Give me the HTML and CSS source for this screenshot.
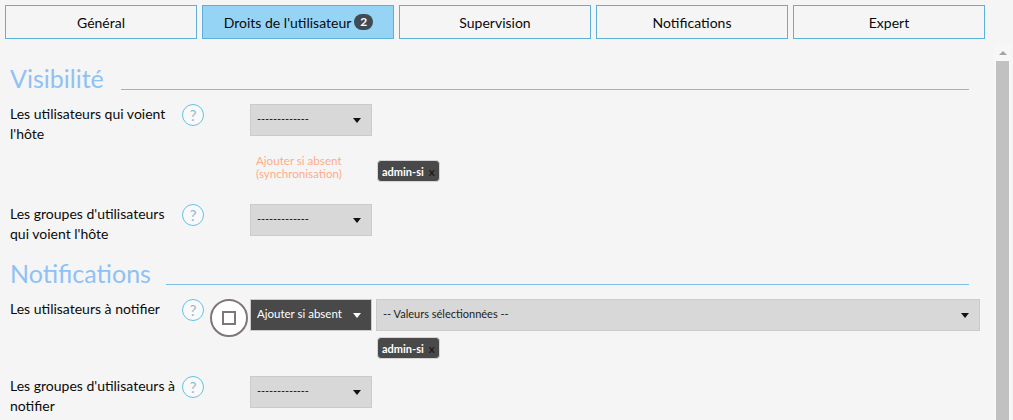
FILE: index.html
```html
<!DOCTYPE html>
<html lang="fr">
<head>
<meta charset="utf-8">
<title>Droits de l'utilisateur</title>
<link rel="stylesheet" href="styles.css">
</head>
<body>
<div class="page">
  <nav class="tabs">
    <a class="tab">Général</a>
    <a class="tab active"><span class="tab-text">Droits de l'utilisateur</span> <span class="badge">2</span></a>
    <a class="tab">Supervision</a>
    <a class="tab">Notifications</a>
    <a class="tab">Expert</a>
  </nav>
  <div class="body">
    <main class="content">
      <h2 class="section first"><span>Visibilité</span></h2>
      <div class="row row-a">
        <label class="label">Les utilisateurs qui voient l'hôte</label>
        <span class="help">?</span>
        <span class="spacer"></span>
        <div class="select"><span class="dashes">-------------</span><i class="caret"></i></div>
      </div>
      <div class="sync">
        <span class="sync-text">Ajouter si absent (synchronisation)</span>
        <span class="tag">admin-si <b>x</b></span>
      </div>
      <div class="row row-b">
        <label class="label">Les groupes d'utilisateurs qui voient l'hôte</label>
        <span class="help">?</span>
        <span class="spacer"></span>
        <div class="select"><span class="dashes">-------------</span><i class="caret"></i></div>
      </div>
      <h2 class="section"><span>Notifications</span></h2>
      <div class="row row-c">
        <label class="label">Les utilisateurs à notifier</label>
        <span class="help">?</span>
        <span class="toggle"><i></i></span>
        <div class="select dark"><span>Ajouter si absent</span><i class="caret"></i></div>
        <div class="select wide"><span>-- Valeurs sélectionnées --</span><i class="caret"></i></div>
      </div>
      <div class="tags"><span class="tag">admin-si <b>x</b></span></div>
      <div class="row row-d">
        <label class="label">Les groupes d'utilisateurs à notifier</label>
        <span class="help">?</span>
        <span class="spacer"></span>
        <div class="select"><span class="dashes">-------------</span><i class="caret"></i></div>
      </div>
    </main>
    <aside class="scrollbar">
      <i class="arrow"></i>
      <div class="thumb"></div>
    </aside>
  </div>
</div>
</body>
</html>
```
FILE: styles.css
```css
* { box-sizing: border-box; }
html, body { margin: 0; height: 100%; overflow: hidden; }
body { background: #f5f5f5; color: #0a0a0a; font-family: Lato, sans-serif; font-size: 14px; }
.page { display: flex; flex-direction: column; height: 420px; }

.tabs { display: flex; gap: 5px; padding: 5px 0 0 5px; width: 985px; flex: none; }
.tab { flex: 1; height: 34px; border: 1px solid #5fb0d8; display: flex; align-items: center; justify-content: center; gap: 3px; font-size: 14px; color: #0a0a0a; background: #f5f5f5; }
.tab.active { background: #96d4f5; }
.tab-text { margin-left: 1px; }
.badge { background: #3f4a54; color: #fff; font-size: 12px; font-weight: 700; line-height: 14px; height: 16px; padding: 1px 6px; border-radius: 9px; }

.body { display: flex; flex: 1; min-height: 0; }
.content { width: 980px; margin-left: 10px; flex: none; overflow: hidden; }

.section { display: flex; align-items: flex-end; gap: 15px; margin: 14px 0 0; font-size: 25px; line-height: 30px; font-weight: 400; color: #8fc1f5; height: 30px; width: 959px; }
.section::after { content: ""; flex: 1; border-bottom: 1px solid #7fbde8; margin-bottom: 3px; }
.section.first { margin-top: 24px; gap: 17px; }

.row { display: flex; align-items: flex-start; line-height: 20px; }
.row-a { margin-top: 11px; }
.row-b { margin-top: 22px; }
.row-c { margin-top: 11px; }
.row-d { margin-top: 17px; }
.label { width: 172px; flex: none; padding-right: 4px; }
.help { width: 22px; height: 22px; flex: none; border: 1px solid #62c3e6; border-radius: 50%; background: #f9f9f9; color: #8fb9d4; font-size: 15px; line-height: 20px; text-align: center; }
.spacer { width: 46px; flex: none; }

.select { width: 122px; height: 32px; flex: none; background: #d8d8d8; border: 1px solid #cbcbcb; display: flex; align-items: center; justify-content: space-between; padding: 0 10px 0 6px; font-size: 11px; color: #222; line-height: 28px; }
.select span { position: relative; top: -1px; }
.select .dashes { color: #303; letter-spacing: -0.1px; }
.caret { width: 0; height: 0; border-left: 4px solid transparent; border-right: 4px solid transparent; border-top: 5px solid #111; }
.select.dark { background: #494949; color: #fff; font-size: 11.5px; }
.select.dark .caret { border-top-color: #fff; }
.select.wide { width: 604px; margin-left: 4px; }

.toggle { width: 38px; height: 38px; flex: none; border: 2px solid #7f7776; border-radius: 50%; background: #fff; margin: 0 2px 0 6px; display: flex; align-items: center; justify-content: center; }
.toggle i { width: 14px; height: 14px; border: 2px solid #7f7776; }

.sync { display: flex; align-items: flex-start; margin: 10px 0 0 246px; }
.sync-text { width: 121px; font-size: 11.6px; line-height: 13px; color: #ffac8a; }
.sync .tag { margin-top: 6px; }
.tag { display: inline-flex; align-items: center; gap: 5px; height: 22px; width: 63px; padding: 0 4px; background: #494949; border: 1px solid #d5d5d5; border-radius: 4px; color: #fff; font-size: 11px; font-weight: 700; }
.tag b { font-size: 12px; font-weight: 400; color: #111; }
.tags { margin-left: 367px; height: 22px; }

.scrollbar { width: 17px; margin: 5px 0 0 4px; flex: none; display: flex; flex-direction: column; align-items: center; background: #f7f7f7; }
.arrow { margin-top: 7px; width: 0; height: 0; border-left: 4px solid transparent; border-right: 4px solid transparent; border-bottom: 4px solid #a3a3a3; }
.thumb { width: 13px; flex: 1; margin-top: 6px; background: #c1c1c1; }
```
